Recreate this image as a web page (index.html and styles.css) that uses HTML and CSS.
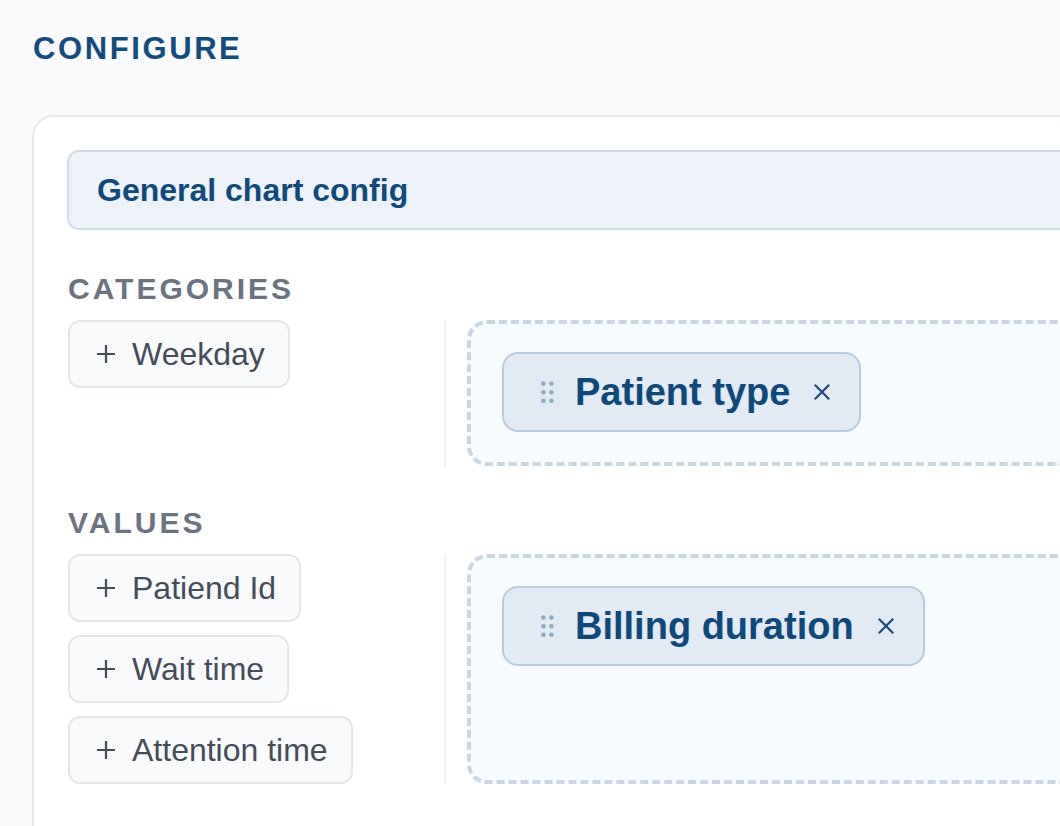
FILE: index.html
```html
<!DOCTYPE html>
<html lang="en">
<head>
<meta charset="utf-8">
<title>Configure</title>
<link rel="stylesheet" href="styles.css">
</head>
<body>
<div class="page">
  <h1 class="title">CONFIGURE</h1>
  <div class="card">
    <div class="general">General chart config</div>

    <div class="section section-first">
      <div class="label">CATEGORIES</div>
      <div class="row row-cat">
        <div class="options">
          <button class="opt"><svg class="plus" viewBox="0 0 20 20"><path d="M10 1v18M1 10h18"/></svg><span>Weekday</span></button>
        </div>
        <div class="divider"></div>
        <div class="zone">
          <div class="chip">
            <svg class="grip" viewBox="0 0 13 22"><circle cx="2.4" cy="2.6" r="2.3"/><circle cx="10.4" cy="2.6" r="2.3"/><circle cx="2.4" cy="11.2" r="2.3"/><circle cx="10.4" cy="11.2" r="2.3"/><circle cx="2.4" cy="19.8" r="2.3"/><circle cx="10.4" cy="19.8" r="2.3"/></svg>
            <span class="chip-text">Patient type</span>
            <svg class="close" viewBox="0 0 20 20"><path d="M2 2l16 16M18 2L2 18"/></svg>
          </div>
        </div>
      </div>
    </div>

    <div class="section">
      <div class="label">VALUES</div>
      <div class="row">
        <div class="options">
          <button class="opt"><svg class="plus" viewBox="0 0 20 20"><path d="M10 1v18M1 10h18"/></svg><span>Patiend Id</span></button>
          <button class="opt"><svg class="plus" viewBox="0 0 20 20"><path d="M10 1v18M1 10h18"/></svg><span>Wait time</span></button>
          <button class="opt"><svg class="plus" viewBox="0 0 20 20"><path d="M10 1v18M1 10h18"/></svg><span>Attention time</span></button>
        </div>
        <div class="divider"></div>
        <div class="zone">
          <div class="chip">
            <svg class="grip" viewBox="0 0 13 22"><circle cx="2.4" cy="2.6" r="2.3"/><circle cx="10.4" cy="2.6" r="2.3"/><circle cx="2.4" cy="11.2" r="2.3"/><circle cx="10.4" cy="11.2" r="2.3"/><circle cx="2.4" cy="19.8" r="2.3"/><circle cx="10.4" cy="19.8" r="2.3"/></svg>
            <span class="chip-text">Billing duration</span>
            <svg class="close" viewBox="0 0 20 20"><path d="M2 2l16 16M18 2L2 18"/></svg>
          </div>
        </div>
      </div>
    </div>
  </div>
</div>
</body>
</html>
```
FILE: styles.css
```css
html, body {
  margin: 0;
  padding: 0;
  background: #f8fafc;
  overflow: hidden;
  height: 826px;
}
body {
  font-family: "Liberation Sans", Arial, Helvetica, sans-serif;
}
* {
  box-sizing: border-box;
}
.page {
  width: 1200px;
  padding: 31px 0 0 33px;
}
.title {
  margin: 0 0 48px 0;
  font-size: 31px;
  line-height: 36px;
  font-weight: 700;
  letter-spacing: 2.6px;
  color: #134b7e;
}
.card {
  margin-left: -1px;
  background: #ffffff;
  border: 2px solid #e6e8ec;
  border-radius: 22px;
  padding: 33px 33px 60px 33px;
  min-height: 900px;
}
.general {
  height: 80px;
  display: flex;
  align-items: center;
  padding-left: 28px;
  background: #edf2f8;
  border: 2px solid #d0dce8;
  border-radius: 12px;
  font-size: 32px;
  font-weight: 700;
  color: #104a7d;
}
.section {
  margin-top: 37px;
}
.section-first {
  margin-top: 41px;
}
.label {
  font-size: 30px;
  line-height: 36px;
  font-weight: 700;
  letter-spacing: 3px;
  color: #6b7280;
  margin-left: 1px;
  margin-bottom: 13px;
}
.row {
  display: flex;
  align-items: stretch;
}
.options {
  width: 376px;
  display: flex;
  flex-direction: column;
  align-items: flex-start;
  gap: 13px;
  flex: none;
  margin-left: 1px;
}
.opt {
  height: 68px;
  display: flex;
  align-items: center;
  gap: 16px;
  padding: 0 23px 0 26px;
  background: #f8fafc;
  border: 2px solid #e4e6ea;
  border-radius: 12px;
  font-family: "Liberation Sans", Arial, Helvetica, sans-serif;
  font-size: 32px;
  color: #454c59;
}
.plus {
  width: 20px;
  height: 20px;
  flex: none;
}
.plus path {
  stroke: #454c59;
  stroke-width: 2.2;
  fill: none;
}
.divider {
  width: 2px;
  background: #f0f1f4;
  flex: none;
  margin-right: 21px;
}
.zone {
  flex: 1;
  min-height: 146px;
  border: 4px dashed #c9d7e5;
  border-radius: 20px;
  background: #f8fbfd;
  padding: 28px 31px;
  display: flex;
  align-items: flex-start;
}
.row-cat .zone {
  margin-bottom: 2px;
}
.chip {
  height: 80px;
  display: flex;
  align-items: center;
  padding: 0 28px 0 37px;
  background: #e2eaf3;
  border: 2px solid #b8cce0;
  border-radius: 16px;
}
.grip {
  width: 13px;
  height: 22px;
  flex: none;
  margin-right: 21px;
}
.grip circle {
  fill: #8eabca;
}
.chip-text {
  font-size: 38px;
  font-weight: 700;
  color: #0f497b;
}
.close {
  width: 18px;
  height: 18px;
  flex: none;
  margin-left: 23px;
}
.close path {
  stroke: #1b4a78;
  stroke-width: 2.4;
  fill: none;
}
```
